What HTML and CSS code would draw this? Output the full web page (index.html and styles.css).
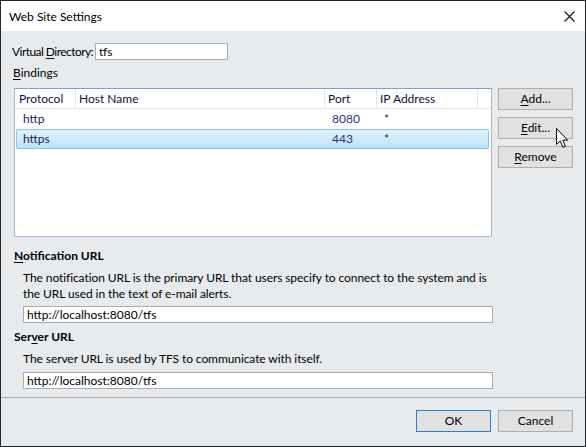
FILE: index.html
```html
<!DOCTYPE html>
<html>
<head>
<meta charset="utf-8">
<link rel="stylesheet" href="styles.css">
</head>
<body>
<div class="window">
  <div class="titlebar">
    <span class="title">Web Site Settings</span>
    <span class="close"><svg width="11" height="11" viewBox="0 0 11 11"><path d="M0.5 0.5L10.5 10.5M10.5 0.5L0.5 10.5" stroke="#111" stroke-width="1.1" fill="none"/></svg></span>
  </div>
  <div class="content">
    <div class="vdir-row">
      <span class="vdir-label">Virtual <u>D</u>irectory:</span>
      <div class="input vdir">tfs</div>
    </div>
    <div class="group-label"><u>B</u>indings</div>
    <div class="bindings">
      <div class="list">
        <div class="list-row header">
          <div class="c c1">Protocol</div>
          <div class="c c2">Host Name</div>
          <div class="c c3">Port</div>
          <div class="c c4">IP Address</div>
          <div class="c c5"></div>
        </div>
        <div class="list-row item">
          <div class="c">http</div>
          <div class="c"></div>
          <div class="c num">8080</div>
          <div class="c">*</div>
          <div class="c"></div>
        </div>
        <div class="list-row item selected">
          <div class="c">https</div>
          <div class="c"></div>
          <div class="c num">443</div>
          <div class="c">*</div>
          <div class="c"></div>
        </div>
      </div>
      <div class="side-buttons">
        <div class="btn"><u>A</u>dd...</div>
        <div class="btn"><u>E</u>dit...</div>
        <div class="btn"><u>R</u>emove</div>
      </div>
    </div>
    <div class="section-label s1"><u>N</u>otification URL</div>
    <div class="desc d1">The notification URL is the primary URL that users specify to connect to the system and is<br>the URL used in the text of e-mail alerts.</div>
    <div class="input url i1">http://localhost:8080/tfs</div>
    <div class="section-label s2">Ser<u>v</u>er URL</div>
    <div class="desc d2">The server URL is used by TFS to communicate with itself.</div>
    <div class="input url i2">http://localhost:8080/tfs</div>
  </div>
  <div class="footer">
    <div class="btn default">OK</div>
    <div class="btn">Cancel</div>
  </div>
  <svg class="cursor" width="13" height="21" viewBox="0 0 13 21"><path d="M0.5 0.5 L0.5 16.5 L4.2 13 L6.9 19.3 L9.4 18.3 L6.8 12.2 L11.6 12.2 Z" fill="#fff" stroke="#000" stroke-width="1" stroke-linejoin="miter"/></svg>
</div>
</body>
</html>
```

FILE: styles.css
```css
* { box-sizing: border-box; }
html, body { margin: 0; padding: 0; }
body {
  width: 586px;
  height: 447px;
  font-family: "Lato", "Liberation Sans", sans-serif;
  font-size: 12px;
  color: #10102a;
  overflow: hidden;
}
u { text-decoration: underline; text-underline-offset: 2px; }

.window {
  position: relative;
  width: 586px;
  height: 447px;
  border: 1px solid #262626;
  background: #e8ebee;
  display: flex;
  flex-direction: column;
}

.titlebar {
  height: 30px;
  background: #fff;
  display: flex;
  align-items: center;
  justify-content: space-between;
  padding: 0 10px 0 8px;
  flex: none;
}
.title { font-size: 12px; color: #000; }
.close { display: flex; width: 11px; height: 11px; margin-top: 1px; }

.content {
  padding: 12px 12px 8px 13px;
  flex: none;
  border-bottom: 1px solid #a9abad;
}

.vdir-row {
  display: flex;
  align-items: center;
  gap: 2px;
  height: 17px;
  margin-left: -2px;
}
.vdir-label { flex: none; white-space: nowrap; color: #000; letter-spacing: -0.55px; }

.input {
  background: #fff;
  border: 1px solid #acacac;
  height: 17px;
  line-height: 15px;
  padding-left: 3px;
  color: #000;
}
.vdir { width: 133px; flex: none; }

.group-label {
  margin-top: 5px;
  height: 16px;
  line-height: 16px;
  margin-left: -1px;
  color: #000;
}

.bindings {
  margin-top: 7px;
  display: grid;
  grid-template-columns: 478px 75px;
  column-gap: 6px;
  align-items: start;
}

.list {
  height: 149px;
  background: #fff;
  border: 1px solid #a7b6c8;
  border-top-color: #7ea0cc;
}
.list-row {
  display: grid;
  grid-template-columns: 61px 249px 52px 101px 1fr;
}
.header {
  height: 20px;
  border-bottom: 1px solid #e5e5e5;
  line-height: 19px;
}
.header .c { border-right: 1px solid #e5e5e5; padding-left: 3px; color: #10104a; }
.header .c1 { padding-left: 4px; }
.header .c5 { border-right: none; }

.item {
  height: 20px;
  line-height: 18px;
  margin: 0 2px 0 1px;
  border: 1px solid transparent;
  grid-template-columns: 60px 249px 52px 101px 1fr;
  color: #1a1a60;
}
.item .c { padding-left: 6px; }
.item .num { color: #24309a; }
.selected {
  background: linear-gradient(#e3f2fc, #bde2f8);
  border-color: #87c4ef;
  border-radius: 2px;
}

.side-buttons {
  display: flex;
  flex-direction: column;
  gap: 7px;
}

.btn {
  width: 75px;
  height: 22px;
  background: #e1e1e1;
  border: 1px solid #adadad;
  text-align: center;
  line-height: 20px;
  color: #000;
}
.btn.default { border-color: #2a7fd4; }

.section-label {
  font-weight: 700;
  height: 16px;
  line-height: 16px;
  color: #000;
}
.s1 { margin-top: 11px; }
.s2 { margin-top: 6px; }

.desc {
  margin-left: 9px;
  line-height: 16px;
  color: #000;
  letter-spacing: -0.08px;
}
.d1 { margin-top: 6px; }
.d2 { margin-top: 6px; }

.url { margin-left: 9px; width: 470px; padding-left: 3px; }
.i1 { margin-top: 4px; }
.i2 { margin-top: 5px; }

.footer {
  flex: 1;
  display: flex;
  justify-content: flex-end;
  align-items: flex-start;
  gap: 7px;
  padding: 12px 12px 0 0;
}

.cursor {
  position: absolute;
  left: 555px;
  top: 127px;
}
```
